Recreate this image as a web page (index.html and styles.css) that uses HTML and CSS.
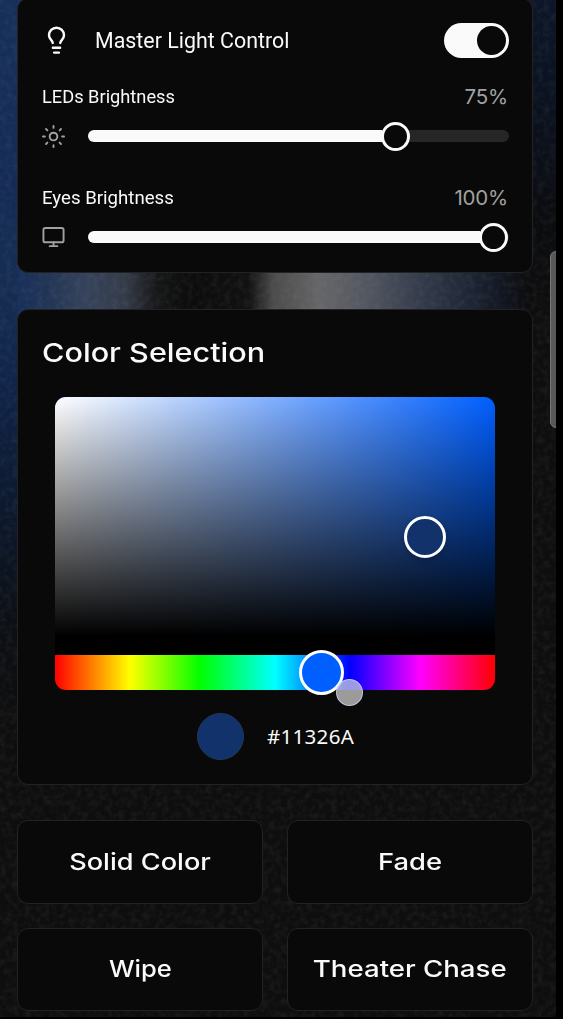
FILE: index.html
```html
<!DOCTYPE html>
<html lang="en">
<head>
<meta charset="utf-8">
<title>Light Control</title>
<link rel="stylesheet" href="styles.css">
</head>
<body>
<div class="screen">
  <svg class="grain" aria-hidden="true">
    <filter id="grain"><feTurbulence type="fractalNoise" baseFrequency="0.16" numOctaves="3" seed="4"/><feColorMatrix values="0 0 0 0 0.4  0 0 0 0 0.4  0 0 0 0 0.4  0.9 0 0 0 -0.35"/></filter>
    <rect width="100%" height="100%" filter="url(#grain)"/>
  </svg>
  <main class="content">
    <section class="card lights">
      <div class="master">
        <svg class="bulb" viewBox="0 0 24 24"><path d="M9 18h6M10 22h4M15.1 14c.2-1 .65-1.75 1.4-2.5A5.7 5.7 0 0 0 18.2 7.6 6.2 6.2 0 0 0 5.8 7.6c0 1.3.5 2.7 1.7 3.9.75.75 1.2 1.5 1.4 2.5"/></svg>
        <span class="master-label"><span class="fit">Master Light Control</span></span>
        <span class="switch"><span class="switch-thumb"></span></span>
      </div>
      <div class="slider-head leds-head"><span class="label leds-label">LEDs Brightness</span><span class="value">75%</span></div>
      <div class="slider-row">
        <svg class="icon" viewBox="0 0 24 24"><circle cx="12" cy="12" r="4"/><path d="M12 1v2M12 21v2M4.22 4.22l1.42 1.42M18.36 18.36l1.42 1.42M1 12h2M21 12h2M5.64 18.36l-1.42 1.42M19.78 4.22l-1.42 1.42"/></svg>
        <span class="track"><span class="fill leds-fill"></span><span class="thumb"></span></span>
      </div>
      <div class="slider-head eyes-head"><span class="label eyes-label">Eyes Brightness</span><span class="value">100%</span></div>
      <div class="slider-row">
        <svg class="icon" viewBox="0 0 24 24"><rect x="1.5" y="2" width="21" height="15" rx="2"/><path d="M8 21h8M12 17v4"/></svg>
        <span class="track"><span class="fill eyes-fill"></span><span class="thumb"></span></span>
      </div>
    </section>
    <section class="card colors">
      <h2 class="title">Color Selection</h2>
      <div class="picker">
        <div class="saturation"><span class="sat-pointer"></span></div>
        <div class="hue"><span class="hue-pointer"></span><span class="touch"></span></div>
      </div>
      <div class="current"><span class="swatch"></span><span class="hex">#11326A</span></div>
    </section>
    <div class="modes">
      <button class="card mode"><span class="mode-solid">Solid Color</span></button>
      <button class="card mode"><span class="mode-fade">Fade</span></button>
      <button class="card mode"><span class="mode-wipe">Wipe</span></button>
      <button class="card mode"><span class="mode-chase">Theater Chase</span></button>
    </div>
  </main>
  <span class="scrollbar"></span>
</div>
</body>
</html>
```
FILE: styles.css
```css
* { box-sizing: border-box; }
html, body { height: 100%; }
body { margin: 0; background: #000; overflow: hidden; color: #fafafa; font-family: Roboto, "Liberation Sans", sans-serif; }
.screen {
  position: relative; width: 556px; height: 1017px; overflow: hidden;
  background:
    linear-gradient(90deg, #18305a 0, #203455 27px, #35425b 67px, #343c49 107px, #151617 140px, #0c0c0c 172px, #111 230px, #4c4c4d 256px, #666668 302px, #50555f 352px, #343b4b 402px, #202838 447px, #111722 482px, #0c0c0d 512px) 18px 262px / 515px 55px no-repeat,
    linear-gradient(180deg, #16305b 0, #142b56 180px, #162d52 290px, #10244a 380px, #0c192f 500px, #0c0f15 620px, #0e0e0e 720px) 0 0 / 30px 100% no-repeat,
    linear-gradient(180deg, #0c1628 0, #0b1220 100px, #0b0c0f 220px, #0e0e0e 320px) 520px 0 / 36px 100% no-repeat,
    #0e0e0e;
}
.grain { position: absolute; inset: 0; width: 100%; height: 100%; opacity: .2; }
.content { position: relative; display: flex; flex-direction: column; padding: 0 23px 0 17px; }
.card { background: #090909; border: 1px solid #222; border-radius: 11px; }
.lights { height: 275px; margin-top: -2px; padding: 24px 23.5px 0 24px; }
.master { display: flex; align-items: center; height: 35px; }
.bulb { width: 29px; height: 29px; fill: none; stroke: #fafafa; stroke-width: 2; stroke-linecap: round; stroke-linejoin: round; }
.master-label { flex: 1; padding-left: 24px; font-size: 22px; line-height: 28px; }
.fit { display: inline-block; transform-origin: left; transform: scaleX(.972); }
.switch { display: flex; justify-content: flex-end; width: 65px; height: 35px; padding: 3px; border-radius: 18px; background: #fafafa; }
.switch-thumb { width: 29px; height: 29px; border-radius: 50%; background: #090909; }
.slider-head { display: flex; justify-content: space-between; height: 28px; align-items: center; }
.leds-head { margin-top: 24px; }
.eyes-head { margin-top: 32px; }
.label { font-size: 19px; transform-origin: left; }
.leds-label { transform: scaleX(.96); }
.eyes-label { transform: scaleX(.98); }
.value { padding-right: .5px; font: 400 20.5px Inter, sans-serif; letter-spacing: -.2px; color: #a1a1a1; }
.slider-row { display: flex; align-items: center; gap: 23px; height: 30px; margin-top: 11px; }
.icon { flex: none; width: 23px; height: 23px; fill: none; stroke: #a1a1a1; stroke-width: 2; stroke-linecap: round; stroke-linejoin: round; }
.track { display: flex; align-items: center; flex: 1; min-width: 0; height: 12px; border-radius: 6px; background: #262626; }
.fill { flex: none; height: 12px; border-radius: 6px 0 0 6px; background: #fafafa; }
.leds-fill { width: 294px; }
.eyes-fill { width: 392px; }
.thumb { flex: none; width: 29px; height: 29px; margin-left: -1px; border: 3px solid #fafafa; border-radius: 50%; background: #090909; }
.colors { height: 476px; margin-top: 36px; padding: 25px 37px 0; }
.title { width: max-content; margin: 0 0 0 -13px; font: 500 26px/36px Inter, sans-serif; transform-origin: left; transform: scaleX(1.177); }
.picker { width: 440px; height: 293px; margin-top: 26px; }
.saturation { position: relative; height: 258px; border-radius: 11px 11px 0 0; border-bottom: 19px solid #000; background: linear-gradient(0deg, #000, transparent), linear-gradient(90deg, #fff, rgba(255,255,255,0)), #005fff; }
.sat-pointer { position: absolute; left: 349px; top: 119px; width: 42px; height: 42px; border: 3px solid #fff; border-radius: 50%; background: #11326a; box-shadow: 0 2px 5px rgba(0,0,0,.2); }
.hue { position: relative; height: 35px; border-radius: 0 0 11px 11px; background: linear-gradient(90deg, #f00 0, #ff0 17%, #0f0 33%, #0ff 50%, #00f 67%, #f0f 83%, #f00); }
.hue-pointer { position: absolute; left: 244px; top: -5px; width: 45px; height: 45px; border: 3px solid #fff; border-radius: 50%; background: #005fff; }
.touch { position: absolute; left: 281px; top: 24px; width: 27px; height: 27px; border: 1px solid rgba(205,205,240,.8); border-radius: 50%; background: rgba(218,218,218,.7); }
.current { display: flex; align-items: center; gap: 23px; margin: 23px 0 0 142px; height: 47px; }
.swatch { width: 47px; height: 47px; border: 1px solid #25375b; border-radius: 50%; background: #11326a; }
.hex { padding-bottom: 2px; font: 20.5px "Noto Sans", sans-serif; letter-spacing: .3px; }
.modes { display: grid; grid-template-columns: 1fr 1fr; gap: 24px; margin-top: 35px; }
.mode { height: 83.5px; padding: 0; display: flex; align-items: center; justify-content: center; color: #fafafa; font: 500 23px Inter, sans-serif; white-space: nowrap; }
.mode-solid { transform: scaleX(1.18); }
.mode-fade { transform: scaleX(1.19); }
.mode-wipe { transform: scaleX(1.11); }
.mode-chase { transform: scaleX(1.2); }
.scrollbar { position: absolute; left: 550px; top: 251px; width: 12px; height: 177px; border: 1px solid #777; border-radius: 6px; background: #595959; }
```
